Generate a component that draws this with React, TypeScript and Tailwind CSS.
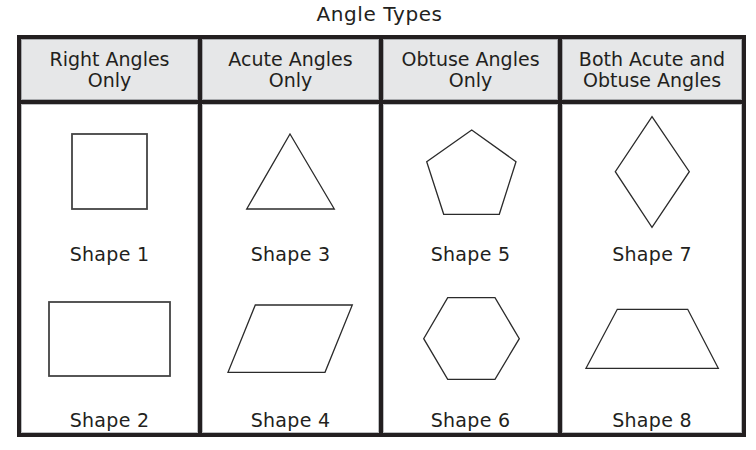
import React from 'react';

type Shape = { label: string; svg: React.ReactNode };

const stroke = { fill: 'none', stroke: '#2b2b2b', strokeWidth: 1.3 };

const columns: { title: string[]; shapes: [Shape, Shape] }[] = [
  {
    title: ['Right Angles', 'Only'],
    shapes: [
      { label: 'Shape 1', svg: <rect x={51} y={30} width={75} height={75} {...stroke} stroke="#444" strokeWidth={1.8} /> },
      { label: 'Shape 2', svg: <rect x={28} y={31} width={121} height={74} {...stroke} stroke="#444" strokeWidth={1.8} /> },
    ],
  },
  {
    title: ['Acute Angles', 'Only'],
    shapes: [
      { label: 'Shape 3', svg: <polygon points="88,30 132.3,105 44.7,105" {...stroke} /> },
      { label: 'Shape 4', svg: <polygon points="53.3,34 150.3,34 123,101.3 26,101.3" {...stroke} /> },
    ],
  },
  {
    title: ['Obtuse Angles', 'Only'],
    shapes: [
      { label: 'Shape 5', svg: <polygon points="88.7,26 133,57.7 116.3,110.3 60.7,110.3 43.7,57.7" {...stroke} /> },
      { label: 'Shape 6', svg: <polygon points="64.7,26.7 112,26.7 136.3,67.7 112,108.3 64.7,108.3 40.7,67.7" {...stroke} /> },
    ],
  },
  {
    title: ['Both Acute and', 'Obtuse Angles'],
    shapes: [
      { label: 'Shape 7', svg: <polygon points="90,12.7 127.3,67.7 90,123.3 53.3,67.7" {...stroke} /> },
      { label: 'Shape 8', svg: <polygon points="55.3,38.3 125.7,38.3 156.3,97.3 24,97.3" {...stroke} /> },
    ],
  },
];

export default function App() {
  return (
    <div className="w-[756px] h-[450px] bg-white text-[#231f20] font-['DejaVu_Sans',Verdana,sans-serif]">
      {/* Title */}
      <div className="h-[28px] flex items-center justify-center text-[20px] tracking-[0.6px] pl-[3px]">Angle Types</div>

      {/* Table */}
      <div className="ml-[17px] mt-[7px] w-[729px] h-[402px] border-4 border-[#231f20] grid grid-cols-[177px_181px_179px_184px]">
        {columns.map((col, i) => (
          <div key={i} className={`min-w-0 flex flex-col ${i > 0 ? 'border-l-4 border-[#231f20]' : ''}`}>
            <div className="h-[65px] border-b-4 border-[#231f20] bg-[#e6e7e8] shadow-[inset_0_0_0_1px_#a7a9ac] flex flex-col items-center justify-center text-[19px] leading-[21px]">
              <span>{col.title[0]}</span>
              <span>{col.title[1]}</span>
            </div>
            <div className="flex-1 flex flex-col shadow-[inset_0_0_0_1px_#bcbec0]">
              <svg width={180} height={133} className="block shrink-0 overflow-visible">
                {col.shapes[0].svg}
              </svg>
              <div className="h-[34px] flex items-center justify-center text-[19px] tracking-[0.3px] leading-none">
                {col.shapes[0].label}
              </div>
              <svg width={180} height={137} className="block shrink-0 overflow-visible">
                {col.shapes[1].svg}
              </svg>
              <div className="h-[25px] flex items-center justify-center text-[19px] tracking-[0.3px] leading-none">
                {col.shapes[1].label}
              </div>
            </div>
          </div>
        ))}
      </div>
    </div>
  );
}
